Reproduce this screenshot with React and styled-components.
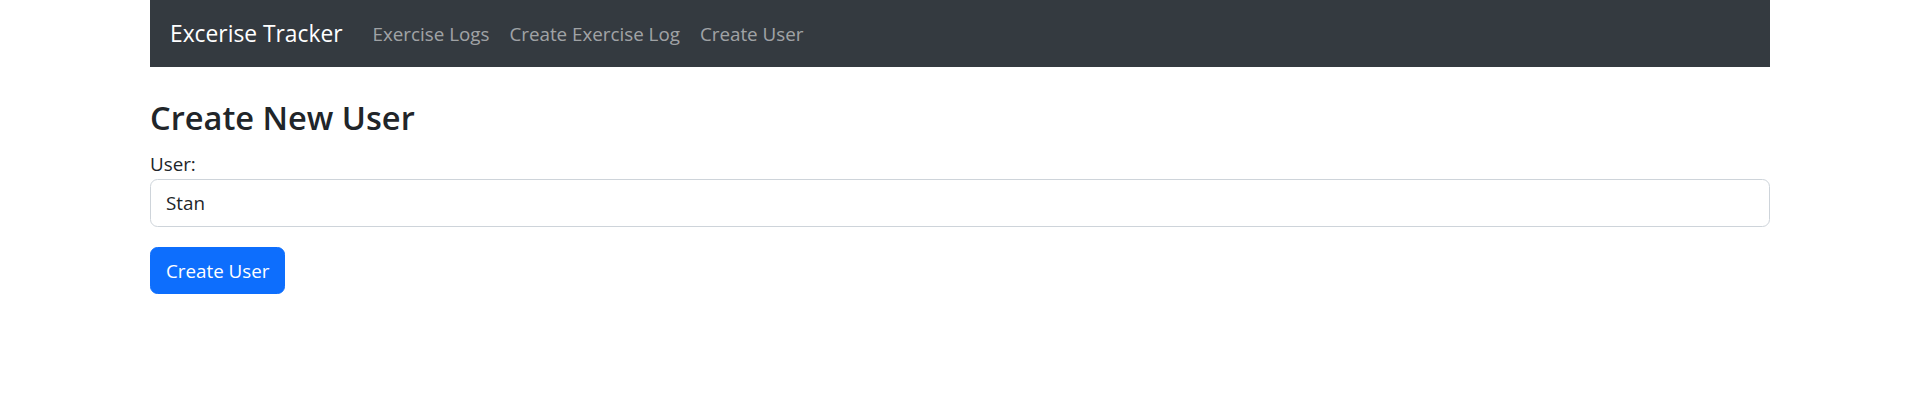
import React from "react";
import styled, { createGlobalStyle } from "styled-components";

const GlobalStyle = createGlobalStyle`
  body {
    margin: 0;
    background: #fff;
    font-family: "Open Sans", "Noto Sans", "Liberation Sans", sans-serif;
    color: #212529;
  }
`;

const Container = styled.div`
  width: 1620px;
  margin: 0 auto;
`;

const Navbar = styled.nav`
  display: flex;
  align-items: center;
  height: 67px;
  padding: 0 20px;
  background-color: #343a40;
`;

const Brand = styled.a`
  margin-right: 20px;
  font-size: 22.8px;
  line-height: 37px;
  color: #fff;
  text-decoration: none;
`;

const NavLinks = styled.div`
  display: flex;
`;

const NavLink = styled.a`
  padding: 0 10px;
  font-size: 18.8px;
  line-height: 30px;
  color: rgba(255, 255, 255, 0.55);
  text-decoration: none;
  cursor: pointer;
`;

const Main = styled.div`
  padding-top: 30px;
`;

const Title = styled.h3`
  margin: 0 0 10px;
  font-size: 32.6px;
  font-weight: 600;
  line-height: 42px;
`;

const FormGroup = styled.div`
  margin-bottom: 20px;
`;

const Label = styled.label`
  display: block;
  font-size: 18.8px;
  line-height: 30px;
`;

const Input = styled.input`
  display: block;
  box-sizing: border-box;
  width: 100%;
  height: 48px;
  padding: 7px 15px;
  font-family: inherit;
  font-size: 18.8px;
  color: #212529;
  border: 1.25px solid #ced4da;
  border-radius: 7.5px;
  outline: none;
`;

const Button = styled.button`
  box-sizing: border-box;
  height: 47px;
  padding: 0 15px;
  font-family: inherit;
  font-size: 18.8px;
  color: #fff;
  background-color: #0d6efd;
  border: 1.25px solid #0d6efd;
  border-radius: 7.5px;
  cursor: pointer;
`;

const App = () => {
  return (
    <Container>
      <GlobalStyle />
      <Navbar>
        <Brand>Excerise Tracker</Brand>
        <NavLinks>
          <NavLink>Exercise Logs</NavLink>
          <NavLink>Create Exercise Log</NavLink>
          <NavLink>Create User</NavLink>
        </NavLinks>
      </Navbar>
      <Main>
        <Title>Create New User</Title>
        <form>
          <FormGroup>
            <Label>User:</Label>
            <Input type="text" defaultValue="Stan" />
          </FormGroup>
          <Button type="button">Create User</Button>
        </form>
      </Main>
    </Container>
  );
};

export default App;
